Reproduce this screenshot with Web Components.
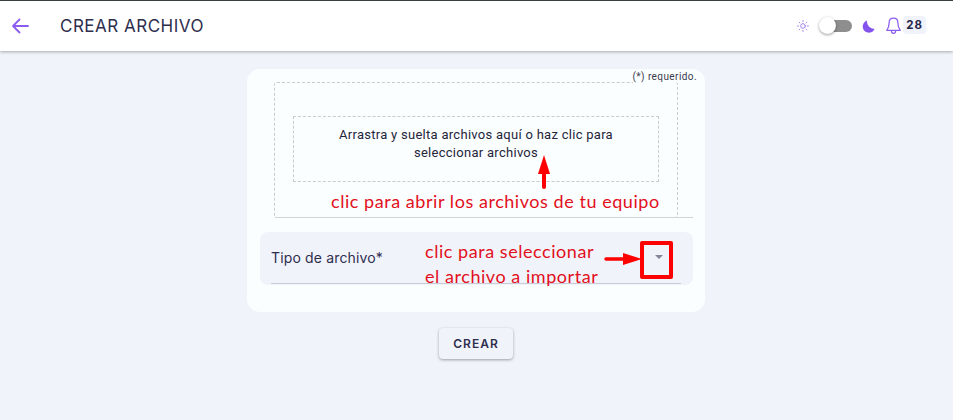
<!DOCTYPE html>
<html lang="es">
<head>
<meta charset="utf-8">
<title>Crear archivo</title>
<style>
    html, body { margin: 0; padding: 0; height: 100%; }
    body { background: #f1f3fb; font-family: Inter, "Liberation Sans", sans-serif; overflow: hidden; }
</style>
</head>
<body>
<app-bar heading="CREAR ARCHIVO"></app-bar>
<main-area>
    <file-form></file-form>
    <action-button>CREAR</action-button>
</main-area>

<script>
class AppBar extends HTMLElement {
    constructor() {
        super();
        this._shadowdom = this.attachShadow({ mode: 'open' });
    }

    connectedCallback() {
        this._shadowdom.innerHTML = /* html */ `
            <style>
                :host {
                    display: flex;
                    align-items: center;
                    height: 50px;
                    background: #fff;
                    border-top: 1px solid #3a4040;
                    box-shadow: 0 1px 3px rgba(0, 0, 0, 0.3);
                    padding: 0 27px 0 11px;
                    color: #2e2e4d;
                }
                .back { width: 18px; height: 18px; display: block; }
                h1 {
                    margin: 0 0 0 31px;
                    font-size: 17px;
                    font-weight: 400;
                    letter-spacing: 0.5px;
                    flex: 1;
                }
                .tools { display: flex; align-items: center; }
                .sun { width: 12px; height: 12px; display: block; margin-right: 11px; }
                .switch { position: relative; width: 32px; height: 12px; background: #8e8e8e; border-radius: 6px; margin-right: 10px; }
                .switch::before {
                    content: "";
                    position: absolute;
                    left: -1px;
                    top: -3px;
                    width: 17px;
                    height: 17px;
                    border-radius: 50%;
                    background: #fff;
                    box-shadow: 0 1px 3px rgba(0, 0, 0, 0.4);
                }
                .moon { width: 13px; height: 13px; display: block; margin-right: 11px; }
                .bell { width: 15px; height: 18px; display: block; margin-right: 2px; }
                .badge {
                    background: #f1f3fb;
                    border-radius: 4px;
                    font-size: 11.5px;
                    font-weight: 700;
                    letter-spacing: 1px;
                    line-height: 18px;
                    padding: 0 3px;
                    color: #25254a;
                    margin-top: -2px;
                }
            </style>
            <svg class="back" viewBox="0 0 18 18" fill="none" stroke="#8b5cf0" stroke-width="1.8" stroke-linecap="round" stroke-linejoin="round">
                <path d="M17 9H2M8.5 2.5L2 9l6.5 6.5"/>
            </svg>
            <h1>${this.getAttribute('heading')}</h1>
            <div class="tools">
                <svg class="sun" viewBox="0 0 12 12" fill="none" stroke="#a583ee" stroke-width="1" stroke-linecap="round">
                    <circle cx="6" cy="6" r="2.3"/>
                    <path d="M6 .6v1M6 10.4v1M.6 6h1M10.4 6h1M2.2 2.2l.7.7M9.1 9.1l.7.7M2.2 9.8l.7-.7M9.1 2.9l.7-.7"/>
                </svg>
                <div class="switch"></div>
                <svg class="moon" viewBox="0 0 13 13">
                    <path fill="#8453ee" d="M5 .6A6.2 6.2 0 1 0 12.6 9 7.5 7.5 0 0 1 5 .6z"/>
                </svg>
                <svg class="bell" viewBox="0 0 15 18" fill="none" stroke="#8b5cf0" stroke-width="1.25" stroke-linejoin="round">
                    <path d="M7.5 1.2c-2.7 0-4.4 2.1-4.4 4.8 0 3.6-1 5.6-2.4 7.3h13.6c-1.4-1.7-2.4-3.7-2.4-7.3 0-2.7-1.7-4.8-4.4-4.800z"/>
                    <path d="M5.4 13.5c0 1.7.9 2.9 2.1 2.9s2.1-1.2 2.1-2.9"/>
                </svg>
                <span class="badge">28</span>
            </div>
        `;
    }
}

class MainArea extends HTMLElement {
    constructor() {
        super();
        this._shadowdom = this.attachShadow({ mode: 'open' });
        this._shadowdom.innerHTML = /* html */ `
            <style>
                :host {
                    display: flex;
                    flex-direction: column;
                    align-items: center;
                    padding: 18px 1px 0 0;
                }
            </style>
            <slot></slot>
        `;
    }
}

class DropZone extends HTMLElement {
    constructor() {
        super();
        this._shadowdom = this.attachShadow({ mode: 'open' });
        this._shadowdom.innerHTML = /* html */ `
            <style>
                :host {
                    display: block;
                    box-sizing: border-box;
                    width: 404px;
                    height: 136px;
                    margin-left: 27px;
                    padding: 33px 18px 0;
                    border: 1px dashed #c8cccc;
                    border-radius: 3px;
                }
                .inner {
                    box-sizing: border-box;
                    height: 66px;
                    border: 1px dashed #c8cccc;
                    padding: 9px 30px 0;
                    text-align: center;
                    font-family: Roboto, "Liberation Sans", sans-serif;
                    font-size: 13px;
                    line-height: 18px;
                    letter-spacing: 0.28px;
                    color: #25253a;
                }
            </style>
            <div class="inner"><slot></slot></div>
        `;
    }
}

class SelectField extends HTMLElement {
    constructor() {
        super();
        this._shadowdom = this.attachShadow({ mode: 'open' });
        this._shadowdom.innerHTML = /* html */ `
            <style>
                :host {
                    display: block;
                    box-sizing: border-box;
                    height: 53px;
                    margin: 14px 12px 0 13px;
                    padding: 0 12px 0 11px;
                    background: #f1f3fb;
                    border-radius: 8px;
                    color: #2e2e4d;
                }
                .row {
                    box-sizing: border-box;
                    height: 52px;
                    display: flex;
                    align-items: center;
                    justify-content: space-between;
                    border-bottom: 1px solid #c8ccd8;
                    font-size: 14px;
                    letter-spacing: 0.15px;
                    padding-bottom: 1px;
                }
                .caret {
                    width: 0;
                    height: 0;
                    border-left: 4.5px solid transparent;
                    border-right: 4.5px solid transparent;
                    border-top: 4.5px solid #85859a;
                    margin-right: 18px;
                }
            </style>
            <div class="row">
                <span><slot></slot></span>
                <span class="caret"></span>
            </div>
        `;
    }
}

class ActionButton extends HTMLElement {
    constructor() {
        super();
        this._shadowdom = this.attachShadow({ mode: 'open' });
        this._shadowdom.innerHTML = /* html */ `
            <style>
                :host {
                    display: flex;
                    align-items: center;
                    justify-content: center;
                    width: 74px;
                    height: 31px;
                    margin-top: 16px;
                    background: #f1f3fb;
                    border-radius: 4px;
                    box-shadow: 0 1px 3px rgba(0, 0, 0, 0.35);
                    color: #2e2e4d;
                    font-size: 12px;
                    font-weight: 600;
                    letter-spacing: 1px;
                }
            </style>
            <slot></slot>
        `;
    }
}

class CalloutText extends HTMLElement {
    constructor() {
        super();
        this._shadowdom = this.attachShadow({ mode: 'open' });
        this._shadowdom.innerHTML = /* html */ `
            <style>
                :host {
                    position: absolute;
                    font-family: Lato, "Open Sans", sans-serif;
                    font-size: 18px;
                    line-height: 24.5px;
                    letter-spacing: 0.55px;
                    color: #e2101c;
                }
                slot { display: block; white-space: pre; }
            </style>
            <slot></slot>
        `;
    }
}

class FileForm extends HTMLElement {
    constructor() {
        super();
        this._shadowdom = this.attachShadow({ mode: 'open' });
        this._shadowdom.innerHTML = /* html */ `
            <style>
                :host {
                    display: block;
                    position: relative;
                    box-sizing: border-box;
                    width: 458px;
                    height: 243px;
                    padding-top: 13px;
                    background: #fbfeff;
                    border-radius: 13px;
                }
                .req {
                    position: absolute;
                    top: 2px;
                    right: 8px;
                    background: #fbfeff;
                    font-family: Roboto, "Liberation Sans", sans-serif;
                    font-size: 10px;
                    line-height: 12px;
                    letter-spacing: 0.42px;
                    color: #3a3a4d;
                }
                .rule { height: 1px; margin: -1px 12px 0 28px; background: #d0d4d4; }
                .marks { position: absolute; left: 0; top: 0; width: 100%; height: 100%; pointer-events: none; }
                .box { position: absolute; left: 393px; top: 172px; width: 33px; height: 38px; box-sizing: border-box; border: 4px solid #fe0000; border-radius: 2px; }
            </style>
            <drop-zone>Arrastra y suelta archivos aquí o haz clic para seleccionar archivos</drop-zone>
            <div class="rule"></div>
            <select-field>Tipo de archivo*</select-field>
            <span class="req">(*) requerido.</span>
            <callout-text style="left:84px;top:120px">clic para abrir los archivos de tu equipo</callout-text>
            <callout-text style="left:178px;top:170px">clic para seleccionar
el archivo a importar</callout-text>
            <svg class="marks" viewBox="0 0 458 243">
                <path d="M297 118V100" stroke="#fe0000" stroke-width="4" stroke-linecap="round"/>
                <path d="M297 86l-6 19h12z" fill="#fe0000"/>
                <path d="M359 190H378" stroke="#fe0000" stroke-width="3.5" stroke-linecap="round"/>
                <path d="M395 190l-19-6v12z" fill="#fe0000"/>
            </svg>
            <div class="box"></div>
        `;
    }
}

customElements.define('app-bar', AppBar);
customElements.define('main-area', MainArea);
customElements.define('drop-zone', DropZone);
customElements.define('select-field', SelectField);
customElements.define('action-button', ActionButton);
customElements.define('callout-text', CalloutText);
customElements.define('file-form', FileForm);
</script>
</body>
</html>
